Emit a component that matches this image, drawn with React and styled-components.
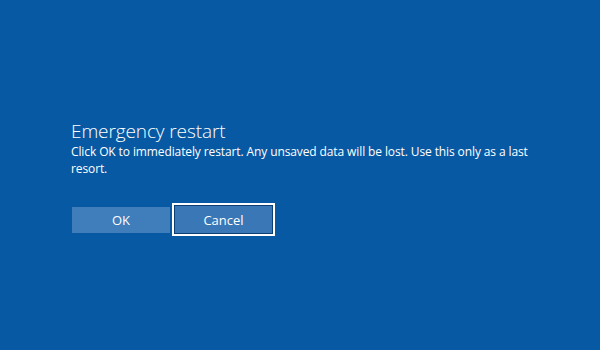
import React from "react";
import styled, { createGlobalStyle } from "styled-components";

const Global = createGlobalStyle`
  html, body { margin: 0; padding: 0; }
  body { background: #0859a3; }
`;

const Screen = styled.div`
  width: 600px;
  height: 350px;
  background: #0859a3;
  box-sizing: border-box;
  padding: 119px 0 0 71px;
  font-family: "Segoe UI", "Open Sans", "Noto Sans", sans-serif;
  color: #ffffff;
  overflow: hidden;
`;

const Dialog = styled.div`
  display: flex;
  flex-direction: column;
  width: 470px;
`;

const Title = styled.h1`
  margin: 0;
  font-size: 19px;
  font-weight: 300;
  line-height: 24px;
  letter-spacing: -0.1px;
`;

const Message = styled.p`
  margin: 0;
  font-size: 12px;
  line-height: 17px;
  font-weight: 400;
  letter-spacing: -0.11px;
`;

const Actions = styled.div`
  display: flex;
  align-items: center;
  gap: 2px;
  margin-top: 26px;
  margin-left: 1px;
`;

const Button = styled.button`
  box-sizing: border-box;
  width: ${(p) => (p.$focused ? "103px" : "98px")};
  height: ${(p) => (p.$focused ? "33px" : "26px")};
  background: ${(p) => (p.$focused ? "#3a77b6" : "#3f7dbb")};
  border: ${(p) => (p.$focused ? "2px solid #ffffff" : "none")};
  box-shadow: ${(p) => (p.$focused ? "inset 0 0 0 1px #0a3f75" : "none")};
  color: #ffffff;
  font-family: inherit;
  font-size: 13px;
  padding: 0;
  display: flex;
  align-items: center;
  justify-content: center;
`;

export default function App() {
  return (
    <>
      <Global />
      <Screen>
        <Dialog>
          <Title>Emergency restart</Title>
          <Message>
            Click OK to immediately restart. Any unsaved data will be lost. Use this only as a last resort.
          </Message>
          <Actions>
            <Button>OK</Button>
            <Button $focused>Cancel</Button>
          </Actions>
        </Dialog>
      </Screen>
    </>
  );
}
